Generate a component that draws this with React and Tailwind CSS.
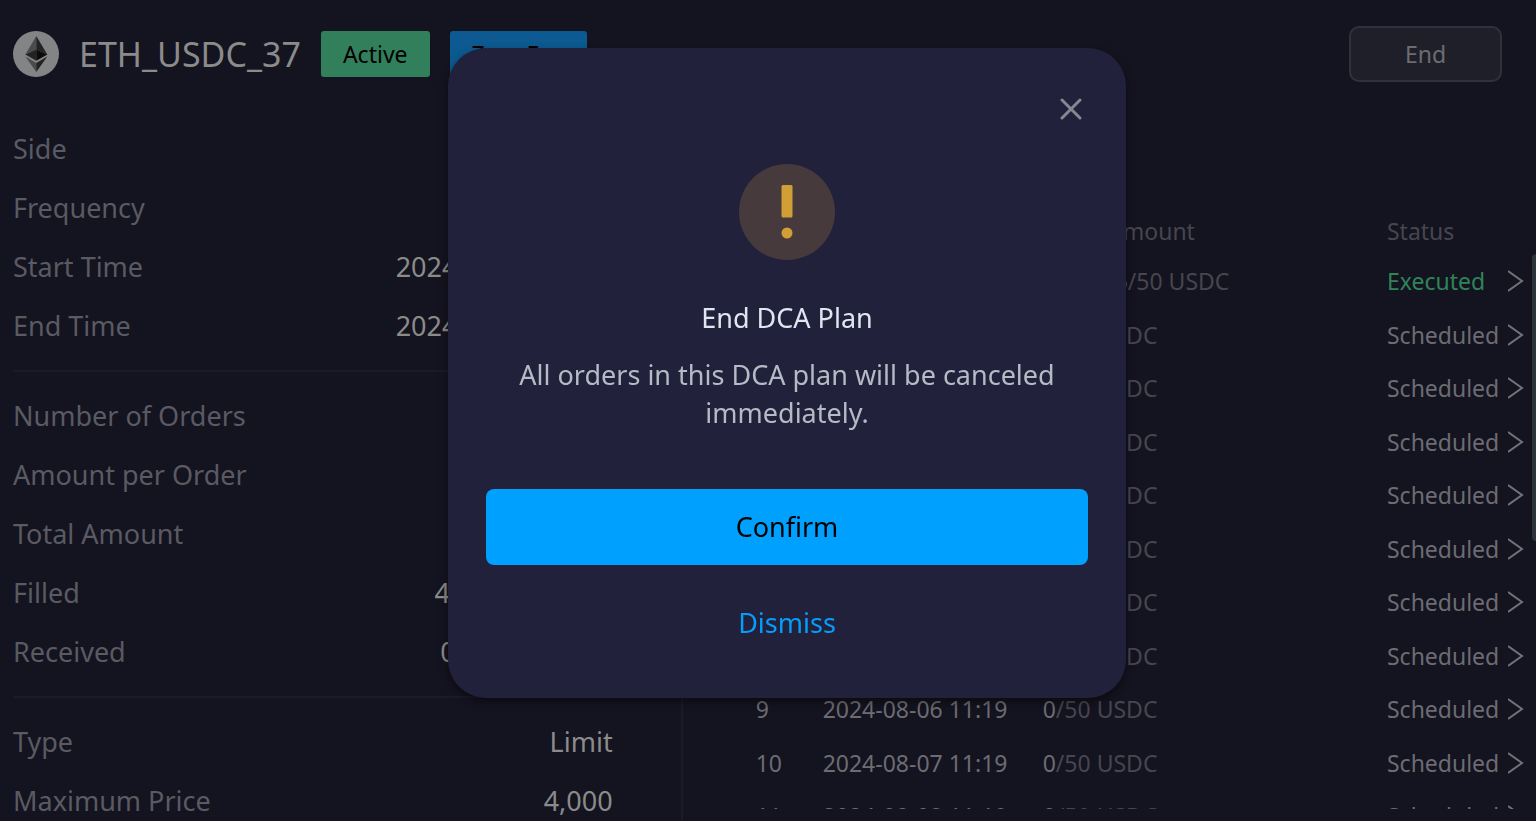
import React from "react";

const groups = [
  [
    ["Side", "Buy"],
    ["Frequency", "Daily"],
    ["Start Time", "2024-07-29 11:19"],
    ["End Time", "2024-08-27 11:19"],
  ],
  [
    ["Number of Orders", "30"],
    ["Amount per Order", "50 USDC"],
    ["Total Amount", "1,500 USDC"],
    ["Filled", "49.9996 USDC"],
    ["Received", "0.015056 ETH"],
  ],
  [
    ["Type", "Limit"],
    ["Maximum Price", "4,000"],
  ],
];

const orders = [
  ["1", "2024-07-29 11:19", "49.9996", "Executed"],
  ["2", "2024-07-30 11:19", "0", "Scheduled"],
  ["3", "2024-07-31 11:19", "0", "Scheduled"],
  ["4", "2024-08-01 11:19", "0", "Scheduled"],
  ["5", "2024-08-02 11:19", "0", "Scheduled"],
  ["6", "2024-08-03 11:19", "0", "Scheduled"],
  ["7", "2024-08-04 11:19", "0", "Scheduled"],
  ["8", "2024-08-05 11:19", "0", "Scheduled"],
  ["9", "2024-08-06 11:19", "0", "Scheduled"],
  ["10", "2024-08-07 11:19", "0", "Scheduled"],
  ["11", "2024-08-08 11:19", "0", "Scheduled"],
];

function EthIcon() {
  return (
    <svg viewBox="0 0 46 46" className="size-[46px] shrink-0" aria-hidden="true">
      <circle cx="23" cy="23" r="23" fill="#838486" />
      <path d="M23.3 5 12.4 23.4l10.9-4.8z" fill="#4b4b4b" />
      <path d="M23.3 5v13.6l11 4.8z" fill="#232323" />
      <path d="m12.4 23.4 10.9 6.3V18.6z" fill="#222222" />
      <path d="m34.3 23.4-11 6.3V18.6z" fill="#0b0b0b" />
      <path d="m12.4 25.6 10.9 15.5v-9.2z" fill="#4b4b4b" />
      <path d="m34.3 25.6-11 15.5v-9.2z" fill="#222222" />
    </svg>
  );
}

function Chevron() {
  return (
    <svg viewBox="0 0 16 22" className="block h-[22px] w-4" fill="none" stroke="#727279" strokeWidth="2" aria-hidden="true">
      <path d="M0 1 14 11 0 21" />
    </svg>
  );
}

function TopBar() {
  return (
    <header className="flex items-center justify-between pt-[26px] pr-[34px] pl-[13px]">
      <div className="flex items-center gap-5">
        <EthIcon />
        <h1 className="text-[34px] leading-[46px] text-[#8b8b8a]">ETH_USDC_37</h1>
        <span className="rounded-[3px] bg-[#317f5b] px-[22px] text-[23px] leading-[46px] text-black">Active</span>
        <span className="rounded-[3px] bg-[#0c5a91] px-[22px] text-[23px] leading-[46px] text-black">Zero Fee</span>
      </div>
      <button className="h-14 w-[153px] rounded-[10px] border-2 border-[#31313d] bg-[#1f1f2a] text-[23px] text-[#6c6c72]">
        End
      </button>
    </header>
  );
}

function PlanDetails() {
  return (
    <section className="overflow-hidden border-r-2 border-[#1b1a27] pr-[68px] pl-[13px]">
      {groups.map((rows, i) => (
        <dl key={i} className="pb-[15px] not-first:border-t-2 not-first:border-[#1b1a27] not-first:pt-[14px]">
          {rows.map(([label, value]) => (
            <div key={label} className="flex justify-between text-[27px] leading-[59px]">
              <dt className="text-[#5a5a62]">{label}</dt>
              <dd className="text-[#8b8b8a]">{value}</dd>
            </div>
          ))}
        </dl>
      ))}
    </section>
  );
}

function OrderTable() {
  return (
    <section className="flex min-h-0 overflow-hidden pt-[89px] pl-[73px]">
      <div className="grow overflow-hidden">
        <table className="w-full table-fixed text-left text-[23px] leading-8 text-[#6c6c72]">
          <thead>
            <tr className="h-[46px] text-[#46464f]">
              <th className="w-[67px] font-normal">No.</th>
              <th className="w-[220px] font-normal">Time</th>
              <th className="font-normal">Filled/Amount</th>
              <th className="w-[121px] font-normal">Status</th>
              <th className="w-6 font-normal" aria-label="Details" />
            </tr>
          </thead>
          <tbody>
            {orders.map(([no, time, filled, status]) => (
              <tr key={no} className="odd:h-[54px] even:h-[53px]">
                <td>{no}</td>
                <td>{time}</td>
                <td>
                  {filled}
                  <span className="text-[#46464f]">/50 USDC</span>
                </td>
                <td className={status === "Executed" ? "text-[#2f8459]" : ""}>{status}</td>
                <td>
                  <button className="block" aria-label={"Open order " + no}>
                    <Chevron />
                  </button>
                </td>
              </tr>
            ))}
          </tbody>
        </table>
      </div>
      <div className="mt-[46px] h-[287px] w-1 shrink-0 rounded-l bg-[#2d343a]" />
    </section>
  );
}

function EndPlanDialog() {
  return (
    <div className="fixed inset-0 flex items-start justify-center pt-12 pl-[38px]">
      <div
        role="dialog"
        aria-modal="true"
        aria-labelledby="dialog-title"
        className="flex w-[678px] flex-col items-center rounded-[38px] bg-[#22213b] px-[38px] pt-[46px] pb-[37px] text-center text-[27px] leading-[38px] shadow-[0_4px_10px_rgba(0,0,0,0.45)]"
      >
        <button className="mr-0.5 flex size-[30px] items-center justify-center self-end" aria-label="Close">
          <svg viewBox="0 0 22 22" className="size-[22px]" fill="none" stroke="#878793" strokeWidth="3" strokeLinecap="round" aria-hidden="true">
            <path d="m2 2 18 18M20 2 2 20" />
          </svg>
        </button>
        <svg viewBox="0 0 96 96" className="mt-10 size-24" aria-hidden="true">
          <circle cx="48" cy="48" r="48" fill="#463a3d" />
          <rect x="42.5" y="21" width="11" height="32.5" rx="1.5" fill="#d29f36" />
          <circle cx="48" cy="69" r="5.5" fill="#d29f36" />
        </svg>
        <h2 id="dialog-title" className="mt-[39px] text-[#e0e6f0]">End DCA Plan</h2>
        <p className="mt-[19px] px-5 text-[#b6bac4]">All orders in this DCA plan will be canceled immediately.</p>
        <button className="mt-[57px] h-[76px] w-full rounded-lg bg-[#00a0ff] text-black">Confirm</button>
        <button className="mt-5 h-[76px] w-full text-[#059dfb]">Dismiss</button>
      </div>
    </div>
  );
}

export default function App() {
  return (
    <div className="flex h-screen flex-col overflow-hidden bg-[#141320] font-['Noto_Sans',sans-serif]">
      <TopBar />
      <main className="grid min-h-0 grow grid-cols-[4fr_5fr] grid-rows-[minmax(0,1fr)] pt-[37px]">
        <PlanDetails />
        <div className="flex min-h-0 flex-col pb-3">
          <OrderTable />
        </div>
      </main>
      <EndPlanDialog />
    </div>
  );
}
